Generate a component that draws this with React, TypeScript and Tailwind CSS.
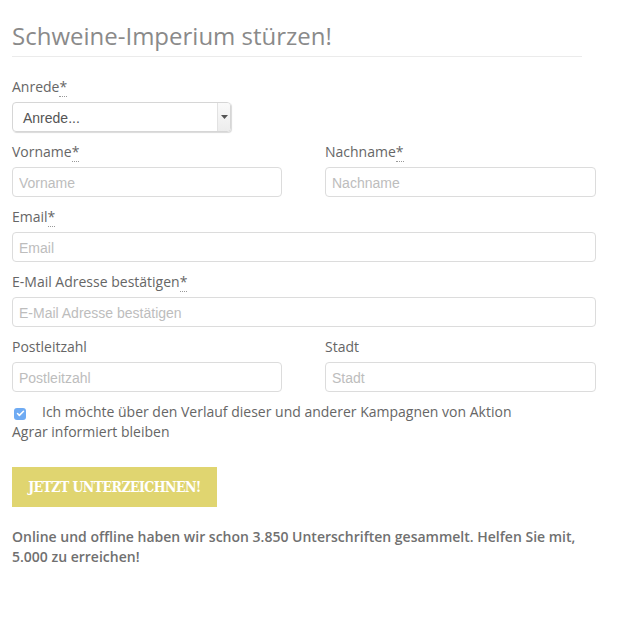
import { Check } from "lucide-react";

const label = "block text-[14px] leading-[20px] text-[#666]";
const input =
  "block w-full h-[30px] rounded-[4px] border border-[#dcdcdc] bg-white px-[6px] pt-[1px] text-[14px] text-[#555] placeholder:text-[#bdbdbd] outline-none [font-family:'Liberation_Sans',Arial,sans-serif]";

function Req() {
  return (
    <abbr className="no-underline border-b border-dotted border-[#999] leading-[12px]" title="Pflichtfeld">
      *
    </abbr>
  );
}

function Field({ name, required, placeholder }: { name: string; required?: boolean; placeholder: string }) {
  return (
    <div className="flex flex-col gap-[5px]">
      <label className={label}>
        {name}
        {required && <Req />}
      </label>
      <input className={input} placeholder={placeholder} />
    </div>
  );
}

export default function App() {
  return (
    <div className="min-h-[629px] bg-white px-[12px] pt-[21px] [font-family:'Open_Sans',sans-serif]">
      <h2 className="w-[570px] border-b border-[#ebebeb] pb-[5px] text-[24px] leading-[30px] font-normal text-[#8a8a8a]">
        Schweine-Imperium stürzen!
      </h2>

      <form className="mt-[20px] w-[584px] flex flex-col gap-[10px]">
        {/* Anrede */}
        <div className="flex flex-col gap-[5px]">
          <label className={label}>
            Anrede
            <Req />
          </label>
          <div className="flex h-[30px] w-[219px] rounded-[4px] border border-[#d6d6d6] shadow-[1px_1px_1px_rgba(0,0,0,0.15)] overflow-hidden">
            <span className="flex-1 pl-[10px] pt-[1px] text-[14px] leading-[28px] text-[#555] [font-family:'Liberation_Sans',Arial,sans-serif]">
              Anrede...
            </span>
            <span className="flex w-[13px] items-center justify-center border-l border-[#e2e2e2] bg-gradient-to-b from-[#fafafa] to-[#ececec]">
              <svg width="7" height="4" viewBox="0 0 7 4">
                <path d="M0 0h7L3.5 4z" fill="#555" />
              </svg>
            </span>
          </div>
        </div>

        <div className="grid grid-cols-[270px_271px] gap-x-[43px]">
          <Field name="Vorname" required placeholder="Vorname" />
          <Field name="Nachname" required placeholder="Nachname" />
        </div>

        <Field name="Email" required placeholder="Email" />
        <Field name="E-Mail Adresse bestätigen" required placeholder="E-Mail Adresse bestätigen" />

        <div className="grid grid-cols-[270px_271px] gap-x-[43px]">
          <Field name="Postleitzahl" placeholder="Postleitzahl" />
          <Field name="Stadt" placeholder="Stadt" />
        </div>

        <label className="block text-[14px] leading-[20px] text-[#666]">
          <span className="relative top-[1px] ml-[2px] mr-[16px] inline-flex h-[12px] w-[12px] items-center justify-center rounded-[3px] bg-[#6fabf3]">
            <Check className="h-[9px] w-[9px] text-white" strokeWidth={4} />
          </span>
          Ich möchte über den Verlauf dieser und anderer Kampagnen von Aktion
          <br />
          Agrar informiert bleiben
        </label>
      </form>

      <button
        type="button"
        className="mt-[25px] flex h-[40px] w-[205px] items-center justify-center bg-[#e0d570] text-[14px] font-bold tracking-[-0.6px] text-white [font-stretch:condensed] [font-family:'DejaVu_Serif',serif]"
      >
        JETZT UNTERZEICHNEN!
      </button>

      <p className="mt-[20px] w-[584px] text-[14px] leading-[20px] font-semibold text-[#707070]">
        Online und offline haben wir schon 3.850 Unterschriften gesammelt. Helfen Sie mit, 5.000 zu erreichen!
      </p>
    </div>
  );
}
